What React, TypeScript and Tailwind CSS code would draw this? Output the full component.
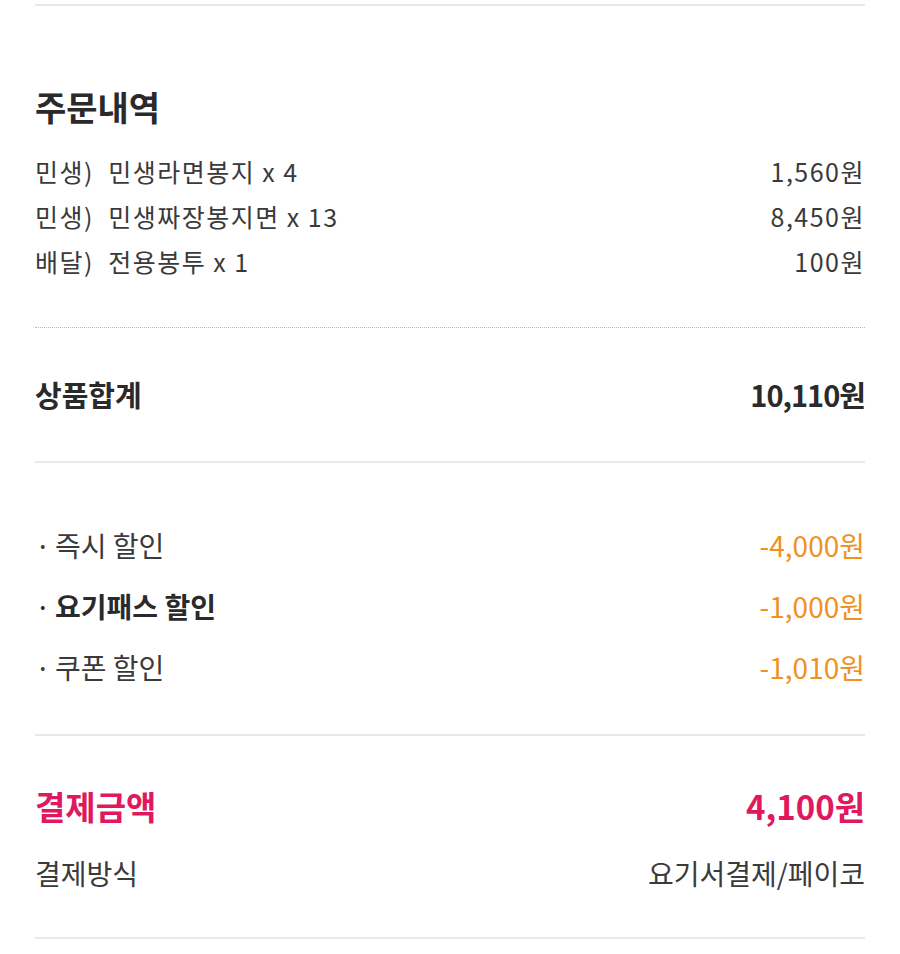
const items = [
  { name: '민생)  민생라면봉지 x 4', price: '1,560원' },
  { name: '민생)  민생짜장봉지면 x 13', price: '8,450원' },
  { name: '배달)  전용봉투 x 1', price: '100원' },
]

const discounts = [
  { label: '즉시 할인', amount: '-4,000원', bold: false },
  { label: '요기패스 할인', amount: '-1,000원', bold: true },
  { label: '쿠폰 할인', amount: '-1,010원', bold: false },
]

export default function App() {
  return (
    <div className="w-[900px] h-[954px] bg-white px-[35px] pt-[4px] text-[#333] font-['Noto_Sans_CJK_KR',sans-serif]">
      <div className="h-[2px] bg-[#e8e8e8]" />

      {/* order list */}
      <h2 className="mt-[81px] h-[40px] leading-[40px] text-[34px] font-bold text-[#2a2a2a]">주문내역</h2>
      <div className="mt-[22px] flex flex-col">
        {items.map((it) => (
          <div key={it.name} className="flex h-[45px] items-center justify-between text-[25px] tracking-[1.5px] text-[#3a3a3a]">
            <span className="whitespace-pre">{it.name}</span>
            <span>{it.price}</span>
          </div>
        ))}
      </div>

      <div className="mt-[43px] border-t border-dotted border-[#b8b8b8]" />

      <div className="mt-[47px] flex h-[40px] items-center justify-between text-[29px] font-bold text-[#2a2a2a]">
        <span>상품합계</span>
        <span className="tracking-[-1px]">10,110원</span>
      </div>

      <div className="mt-[46px] h-[2px] bg-[#e8e8e8]" />

      {/* discounts */}
      <div className="mt-[61px] flex flex-col gap-[20px]">
        {discounts.map((d) => (
          <div key={d.label} className="flex h-[41px] items-center justify-between text-[28px]">
            <span className={d.bold ? 'font-bold text-[#2a2a2a]' : 'text-[#3a3a3a]'}>
              <span className="inline-block w-[20px] font-normal">·</span>
              {d.label}
            </span>
            <span className="text-[#ef921f]">{d.amount}</span>
          </div>
        ))}
      </div>

      <div className="mt-[47px] h-[2px] bg-[#e8e8e8]" />

      {/* payment */}
      <div className="mt-[51px] flex h-[40px] items-center justify-between text-[33px] font-bold text-[#e0195f]">
        <span>결제금액</span>
        <span>4,100원</span>
      </div>
      <div className="mt-[26px] flex h-[40px] items-center justify-between text-[28px] text-[#3a3a3a]">
        <span>결제방식</span>
        <span>요기서결제/페이코</span>
      </div>

      <div className="mt-[44px] h-[2px] bg-[#e8e8e8]" />
    </div>
  )
}
